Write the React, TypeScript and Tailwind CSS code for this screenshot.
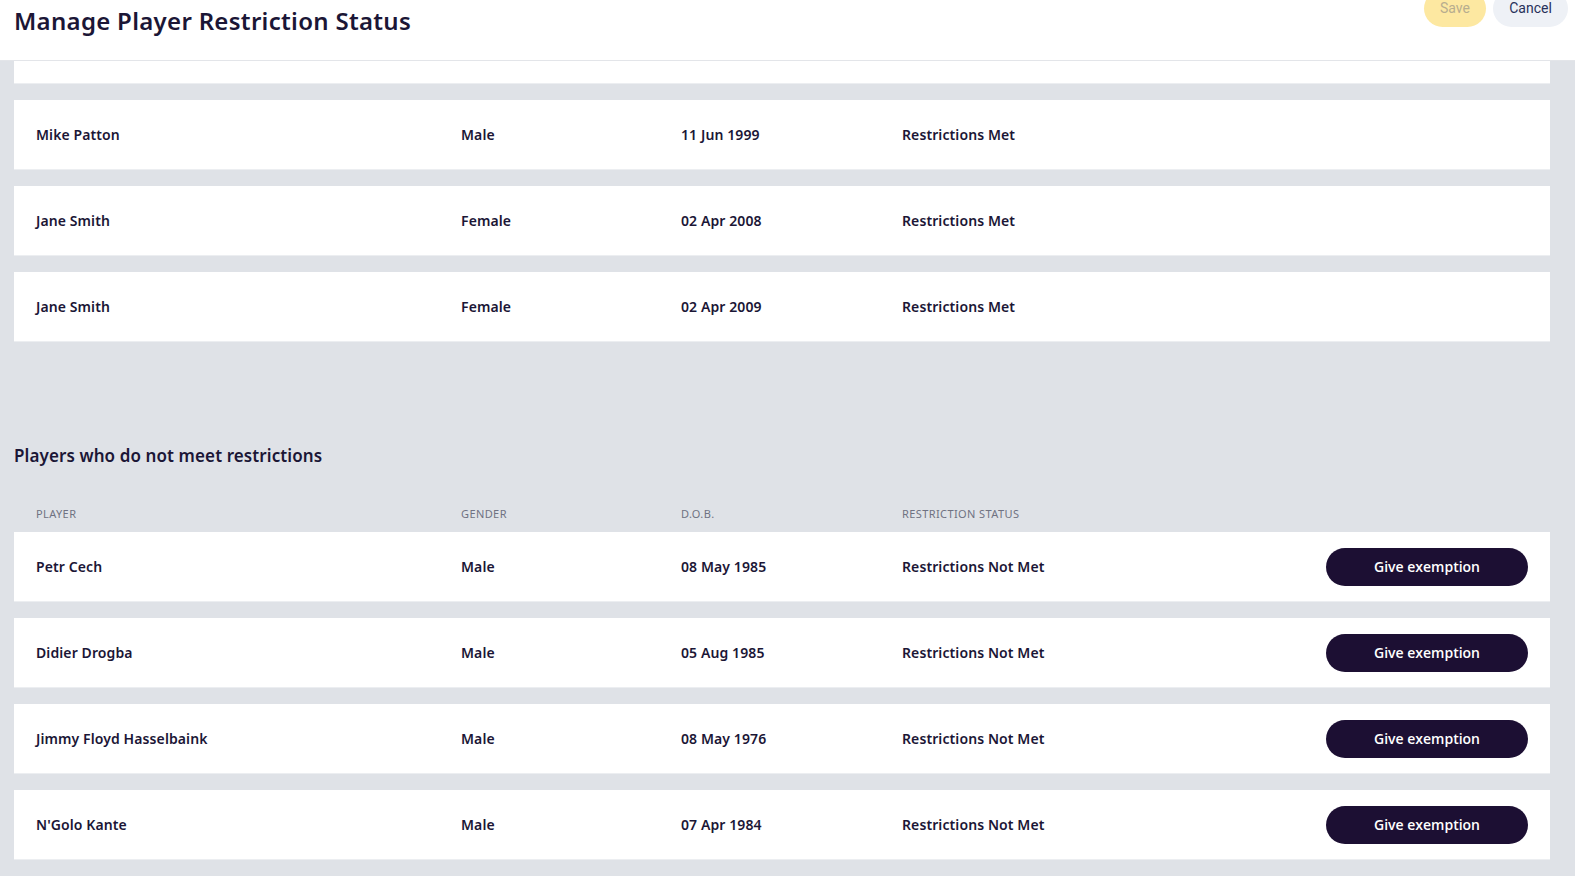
import * as React from "react";

type Player = {
  name: string;
  gender: string;
  dob: string;
  status: string;
};

const metPlayers: Player[] = [
  { name: "Mike Patton", gender: "Male", dob: "11 Jun 1999", status: "Restrictions Met" },
  { name: "Jane Smith", gender: "Female", dob: "02 Apr 2008", status: "Restrictions Met" },
  { name: "Jane Smith", gender: "Female", dob: "02 Apr 2009", status: "Restrictions Met" },
];

const notMetPlayers: Player[] = [
  { name: "Petr Cech", gender: "Male", dob: "08 May 1985", status: "Restrictions Not Met" },
  { name: "Didier Drogba", gender: "Male", dob: "05 Aug 1985", status: "Restrictions Not Met" },
  { name: "Jimmy Floyd Hasselbaink", gender: "Male", dob: "08 May 1976", status: "Restrictions Not Met" },
  { name: "N'Golo Kante", gender: "Male", dob: "07 Apr 1984", status: "Restrictions Not Met" },
];

const cols = "grid grid-cols-[425px_220px_221px_1fr_auto] items-center px-[22px]";

function PlayerRow({ player, exemption }: { player: Player; exemption?: boolean }) {
  return (
    <div
      className={`${cols} h-[70px] bg-white border-b border-[#eceef1] text-[14px] font-semibold tracking-[0.1px] text-[#1b1636]`}
    >
      <span>{player.name}</span>
      <span>{player.gender}</span>
      <span>{player.dob}</span>
      <span>{player.status}</span>
      <span>
        {exemption && (
          <button className="h-[38px] w-[202px] rounded-full bg-[#1c0f33] text-white text-[14px] font-semibold tracking-normal font-['Open_Sans',sans-serif]">
            Give exemption
          </button>
        )}
      </span>
    </div>
  );
}

export default function App() {
  return (
    <div className="h-[876px] overflow-hidden bg-[#dfe2e7] font-['Noto_Sans',sans-serif]">
      <header className="relative h-[61px] bg-white border-b border-[#e3e5e9]">
        <h1 className="pl-[14px] pt-[3px] text-[24px] leading-[36px] font-semibold tracking-[0.3px] text-[#1b1636]">
          Manage Player Restriction Status
        </h1>
        <div className="absolute right-[7px] top-[-10px] flex gap-[7px] font-['Roboto',sans-serif] text-[14px]">
          <button className="h-[37px] w-[62px] rounded-full bg-[#fde8a1] text-[#b7ad8f]">
            Save
          </button>
          <button className="h-[37px] w-[75px] rounded-full bg-[#eef1f6] text-[#27305a]">
            Cancel
          </button>
        </div>
      </header>

      <main className="pl-[14px] pr-[25px]">
        <div className="h-[23px] bg-white border-b border-[#eceef1]" />
        <div className="mt-[16px] flex flex-col gap-[16px]">
          {metPlayers.map((p, i) => (
            <PlayerRow key={i} player={p} />
          ))}
        </div>

        <h2 className="mt-[102px] text-[17px] leading-[24px] font-semibold tracking-[0.1px] text-[#1b1636]">
          Players who do not meet restrictions
        </h2>

        <div
          className={`${cols} mt-[28px] h-[36px] text-[11px] uppercase tracking-[0.4px] text-[#6f7282]`}
        >
          <span>Player</span>
          <span>Gender</span>
          <span>D.O.B.</span>
          <span>Restriction Status</span>
          <span />
        </div>

        <div className="flex flex-col gap-[16px]">
          {notMetPlayers.map((p, i) => (
            <PlayerRow key={i} player={p} exemption />
          ))}
        </div>
      </main>
    </div>
  );
}
